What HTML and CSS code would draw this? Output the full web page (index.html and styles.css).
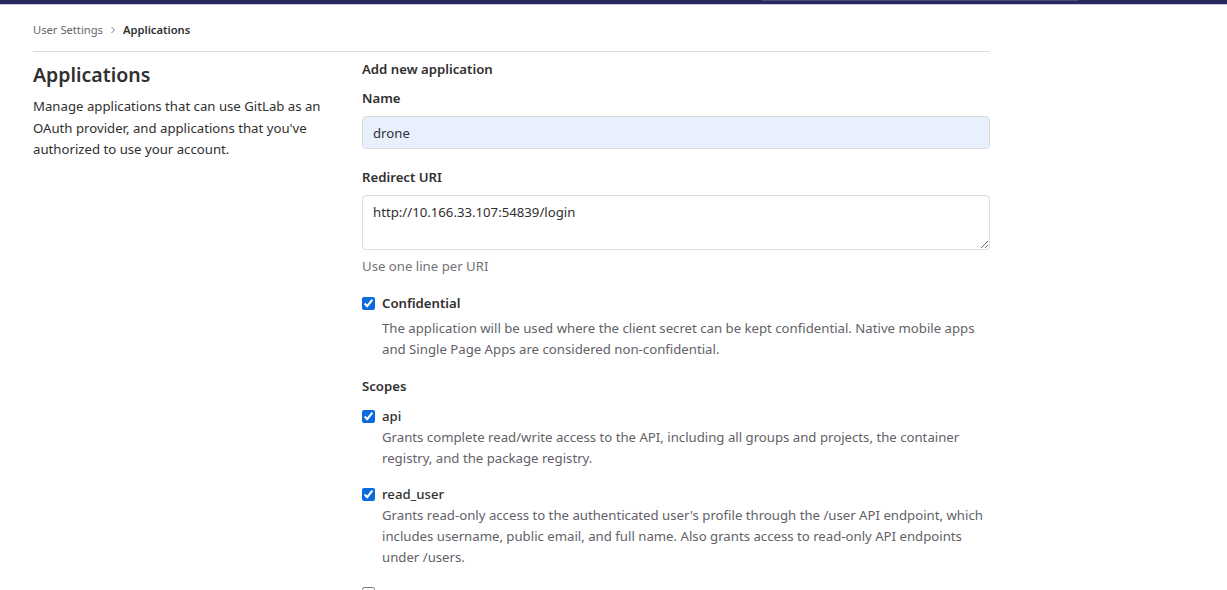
FILE: index.html
```html
<!DOCTYPE html>
<html>
<head>
<meta charset="utf-8">
<link rel="stylesheet" href="styles.css">
</head>
<body>
<header class="topbar"><div class="topsearch"></div></header>
<div class="container">
  <nav class="breadcrumbs">
    <span class="crumb">User Settings</span>
    <svg class="chev" width="8" height="8" viewBox="0 0 8 8"><path d="M2.5 1 L5.5 4 L2.5 7" fill="none" stroke="#737278" stroke-width="1"/></svg>
    <span class="crumb current">Applications</span>
  </nav>
  <div class="row">
    <div class="left">
      <h1>Applications</h1>
      <p>Manage applications that can use GitLab as an OAuth provider, and applications that you've authorized to use your account.</p>
    </div>
    <div class="right">
      <h2>Add new application</h2>
      <div class="group">
        <label class="lbl">Name</label>
        <input class="input filled" type="text" value="drone">
      </div>
      <div class="group">
        <label class="lbl">Redirect URI</label>
        <textarea class="input area">http://10.166.33.107:54839/login</textarea>
        <div class="help">Use one line per URI</div>
      </div>
      <div class="check conf">
        <input type="checkbox" checked>
        <div class="ctext">
          <div class="cname">Confidential</div>
          <div class="cdesc">The application will be used where the client secret can be kept confidential. Native mobile apps and Single Page Apps are considered non-confidential.</div>
        </div>
      </div>
      <div class="scopes">Scopes</div>
      <div class="check scope">
        <input type="checkbox" checked>
        <div class="ctext">
          <div class="cname normal">api</div>
          <div class="cdesc">Grants complete read/write access to the API, including all groups and projects, the container registry, and the package registry.</div>
        </div>
      </div>
      <div class="check scope">
        <input type="checkbox" checked>
        <div class="ctext">
          <div class="cname normal">read_user</div>
          <div class="cdesc">Grants read-only access to the authenticated user's profile through the /user API endpoint, which includes username, public email, and full name. Also grants access to read-only API endpoints under /users.</div>
        </div>
      </div>
      <div class="check scope">
        <input type="checkbox">
      </div>
    </div>
  </div>
</div>
</body>
</html>
```
FILE: styles.css
```css
* { box-sizing: border-box; }
html, body { margin: 0; padding: 0; background: #fff; overflow: hidden; height: 590px; }
body {
  font-family: "Noto Sans", "Open Sans", sans-serif;
  font-size: 13.2px;
  color: #303030;
}
.topbar {
  height: 5px;
  background: #292961;
  border-bottom: 1px solid #c9c9e8;
  position: relative;
}
.topsearch {
  position: absolute;
  left: 762px;
  top: 0;
  width: 316px;
  height: 1px;
  background: #4a4a80;
}
.container {
  width: 957px;
  margin-left: 33px;
}
.breadcrumbs {
  display: flex;
  align-items: center;
  height: 47px;
  padding-top: 3px;
  border-bottom: 1px solid #dcdcde;
  font-size: 11.2px;
  gap: 6px;
}
.crumb { color: #666; }
.crumb.current { color: #303030; font-weight: 600; }
.chev { margin-top: 1px; }
.row { display: flex; }
.left { width: 329px; padding-right: 20px; }
.left h1 {
  font-size: 19.5px;
  font-weight: 600;
  margin: 10px 0 8px;
  line-height: 26px;
}
.left p { margin: 0; line-height: 21.5px; }
.right { flex: 1; padding-top: 7px; }
.right h2 { font-size: 13.2px; font-weight: 600; margin: 0 0 9px; line-height: 20px; }
.group { margin-bottom: 18px; }
.lbl { display: block; font-weight: 600; line-height: 20px; margin-bottom: 8px; }
.input {
  display: block;
  width: 100%;
  font-family: inherit;
  font-size: 13.2px;
  color: #303030;
  border: 1px solid #dcdcde;
  border-radius: 4px;
  padding: 6px 10px;
  background: #fff;
  outline: none;
}
.input.filled { height: 33px; background: #e8f0fe; }
.area { height: 55px; resize: vertical; line-height: 20px; }
.help { color: #737278; margin-top: 6px; line-height: 20px; }
.check { display: flex; align-items: flex-start; margin-bottom: 16px; }
.check input {
  width: 13px; height: 13px;
  margin: 4px 7px 0 0;
  flex: none;
  accent-color: #0b6bde;
}
.cname { font-weight: 600; line-height: 20px; }
.cname.normal { font-weight: 500; }
.cdesc { color: #626168; line-height: 21px; }
.conf .cdesc { margin-top: 5px; }
.conf { margin-bottom: 16px; margin-top: -1px; }
.scopes { font-weight: 600; line-height: 20px; margin: 0 0 10px; }
.scope { margin-bottom: 15px; }
.scope .cdesc { margin-top: 1px; }
```
